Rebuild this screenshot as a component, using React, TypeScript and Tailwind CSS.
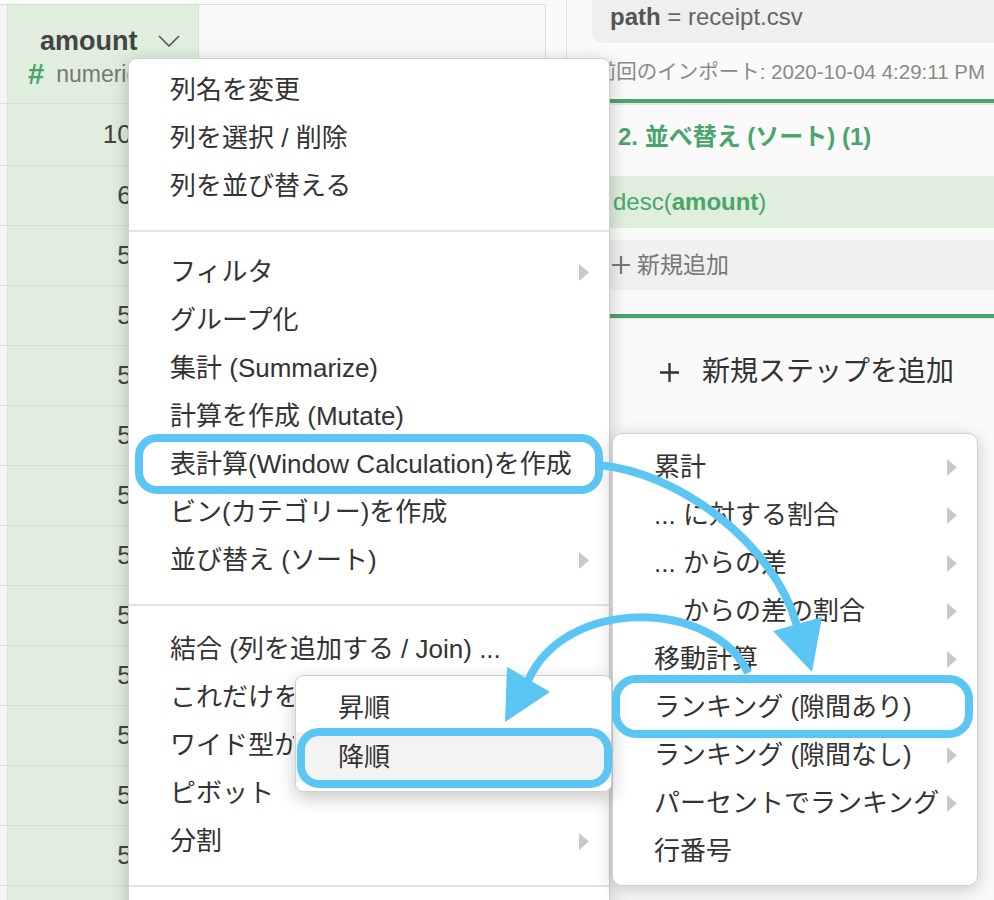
import React from 'react';

type MenuItem = { label: string; sub?: boolean; clip?: boolean };

const mainGroups: MenuItem[][] = [
  [{ label: '列名を変更' }, { label: '列を選択 / 削除' }, { label: '列を並び替える' }],
  [
    { label: 'フィルタ', sub: true },
    { label: 'グループ化' },
    { label: '集計 (Summarize)' },
    { label: '計算を作成 (Mutate)' },
    { label: '表計算(Window Calculation)を作成' },
    { label: 'ビン(カテゴリー)を作成' },
    { label: '並び替え (ソート)', sub: true },
  ],
  [
    { label: '結合 (列を追加する / Join) ...' },
    { label: 'これだけを残す', clip: true },
    { label: 'ワイド型からロング型へ', clip: true },
    { label: 'ピボット' },
    { label: '分割', sub: true },
  ],
];

const windowItems: MenuItem[] = [
  { label: '累計', sub: true },
  { label: '... に対する割合', sub: true },
  { label: '... からの差', sub: true },
  { label: '... からの差の割合', sub: true },
  { label: '移動計算', sub: true },
  { label: 'ランキング (隙間あり)' },
  { label: 'ランキング (隙間なし)', sub: true },
  { label: 'パーセントでランキング', sub: true },
  { label: '行番号' },
];

const amounts = [
  '10925', '6800', '5780', '5480', '5480', '5480', '5480', '5480',
  '5480', '5480', '5480', '5480', '5480', '', '',
];

function Caret() {
  return (
    <svg width="10" height="17" viewBox="0 0 10 17" className="shrink-0">
      <path d="M0 0L10 8.5L0 17Z" fill="#c9c9c9" />
    </svg>
  );
}

function Row({ item }: { item: MenuItem }) {
  return (
    <div className="flex h-12 items-center justify-between pl-[41px] pr-[20px]">
      <span className={`whitespace-nowrap ${item.clip ? 'max-w-[124px] overflow-hidden' : ''}`}>{item.label}</span>
      {item.sub && <Caret />}
    </div>
  );
}

function PlusIcon({ color, size = 18 }: { color: string; size?: number }) {
  return (
    <svg width={size} height={size} viewBox="0 0 18 18" className="shrink-0">
      <path d="M9 0V18M0 9H18" stroke={color} strokeWidth="2.2" />
    </svg>
  );
}

function DataTable() {
  return (
    <div className="w-[546px] flex-none pt-[4px]">
      <div className="flex h-[100px] border-y border-[#dcdcdc]">
        <div className="w-[8px] border-r border-[#dcdcdc] bg-[#f4f4f4]" />
        <div className="w-[191px] border-r border-[#dcdcdc] bg-[#dfeedd] pt-[20px]">
          <div className="flex items-center pl-[32px]">
            <span className="text-[27px] font-bold leading-[32px] text-[#444]">amount</span>
            <svg width="22" height="12" viewBox="0 0 22 12" className="ml-[20px]">
              <path d="M1 1L11 11L21 1" fill="none" stroke="#555" strokeWidth="1.6" />
            </svg>
          </div>
          <div className="mt-[3px] flex items-center pl-[20px] leading-[28px]">
            <span className="mr-[12px] text-[29px] font-bold text-[#4aa56a]">#</span>
            <span className="text-[23px] text-[#777]">numeric</span>
          </div>
        </div>
        <div className="flex-1 border-r border-[#dcdcdc] bg-[#f8f8f8]" />
      </div>
      {amounts.map((a, i) => (
        <div key={i} className={`flex border-b border-[#dcdcdc] ${i === 0 ? 'h-[62px]' : 'h-[60px]'}`}>
          <div className="w-[8px] border-r border-[#dcdcdc] bg-[#f4f4f4]" />
          <div className="flex w-[191px] items-center justify-end border-r border-[#dcdcdc] bg-[#dfeedd] pr-[23px] text-[26px] text-[#444]">
            {a}
          </div>
          <div className="flex-1 bg-white" />
        </div>
      ))}
    </div>
  );
}

function StepPanel() {
  return (
    <div className="flex-1">
      <div className="h-[43px] rounded-bl-[10px] bg-[#efefef] pl-[18px] text-[24px] leading-[34px] text-[#666]">
        <span className="font-bold text-[#555]">path</span> = receipt.csv
      </div>
      <div className="mt-[14px] whitespace-nowrap pr-[9px] text-right text-[20.5px] leading-[30px] text-[#8a8a8a]">
        前回のインポート: 2020-10-04 4:29:11 PM
      </div>
      <div className="mt-[12px] h-[4px] bg-[#4aa56a]" />
      <div className="h-[2px] bg-[#e6e6e6]" />
      <div className="mt-[16px] pl-[26px] text-[24px] font-bold leading-[32px] text-[#4aa56a]">
        2. 並べ替え (ソート) (1)
      </div>
      <div className="mt-[23px] flex h-[52px] items-center bg-[#dfeedd] pl-[21px] text-[24px] text-[#4aa56a]">
        desc(<span className="font-bold">amount</span>)
      </div>
      <div className="mt-[12px] flex h-[50px] items-center bg-[#f0f0f0] pl-[20px] text-[23px] text-[#777]">
        <PlusIcon color="#777" />
        <span className="ml-[7px]">新規追加</span>
      </div>
      <div className="mt-[24px] h-[4px] bg-[#4aa56a]" />
      <div className="h-[1px] bg-[#e6e6e6]" />
      <div className="mt-[34px] flex items-center pl-[68px] text-[28px] leading-[38px] text-[#333]">
        <PlusIcon color="#333" size={19} />
        <span className="ml-[23px]">新規ステップを追加</span>
      </div>
    </div>
  );
}

export default function App() {
  return (
    <div className="relative h-[900px] w-[994px] overflow-hidden bg-[#fafafa] font-['Liberation_Sans','Noto_Sans_CJK_JP',sans-serif]">
      <div className="flex h-full">
        <DataTable />
        <div className="w-[21px] flex-none border-r border-[#e4e4e4]" />
        <div className="w-[25px] flex-none" />
        <StepPanel />
      </div>

      {/* main column menu */}
      <div className="absolute left-[128px] top-[58px] h-[860px] w-[482px] rounded-t-[8px] border border-[#cfcfcf] bg-white pt-[7px] text-[26px] text-[#333] shadow-[0_4px_18px_rgba(0,0,0,0.22)]">
        {mainGroups.map((group, gi) => (
          <div key={gi}>
            {group.map((item) => (
              <Row key={item.label} item={item} />
            ))}
            <div className={`mt-5 h-[2px] bg-[#e3e3e3] ${gi === 0 ? 'mb-4' : 'mb-[19px]'}`} />
          </div>
        ))}
      </div>

      {/* window calculation submenu */}
      <div className="absolute left-[612px] top-[433px] h-[453px] w-[366px] rounded-[10px] border border-[#cfcfcf] bg-white pt-[9px] text-[26px] text-[#333] shadow-[0_4px_18px_rgba(0,0,0,0.2)]">
        {windowItems.map((item) => (
          <Row key={item.label} item={item} />
        ))}
      </div>

      {/* sort submenu */}
      <div className="absolute left-[295px] top-[675px] h-[117px] w-[317px] rounded-[8px] border border-[#cfcfcf] bg-white pt-[8px] text-[26px] text-[#333] shadow-[0_6px_18px_rgba(0,0,0,0.22)]">
        <div className="flex h-12 items-center pl-[42px]">昇順</div>
        <div className="flex h-[50px] items-center bg-[#f3f3f3] pl-[42px]">降順</div>
      </div>

      {/* highlights */}
      <div className="absolute left-[135px] top-[434px] h-[60px] w-[468px] rounded-[22px] border-[8px] border-[#5bc5f4]" />
      <div className="absolute left-[612px] top-[675px] h-[63px] w-[361px] rounded-[24px] border-[8px] border-[#5bc5f4]" />
      <div className="absolute left-[297px] top-[728px] h-[60px] w-[315px] rounded-[22px] border-[8px] border-[#5bc5f4]" />

      <svg className="pointer-events-none absolute left-0 top-0" width="994" height="900" viewBox="0 0 994 900">
        <path d="M598 465 C680 472 775 545 797 626" fill="none" stroke="#5bc5f4" strokeWidth="8" />
        <path d="M773 631 L822 617 L812 672 Z" fill="#5bc5f4" />
        <path d="M748 673 C715 600 565 595 528 681" fill="none" stroke="#5bc5f4" strokeWidth="8" />
        <path d="M507 667 L550 692 L505 722 Z" fill="#5bc5f4" />
      </svg>
    </div>
  );
}
